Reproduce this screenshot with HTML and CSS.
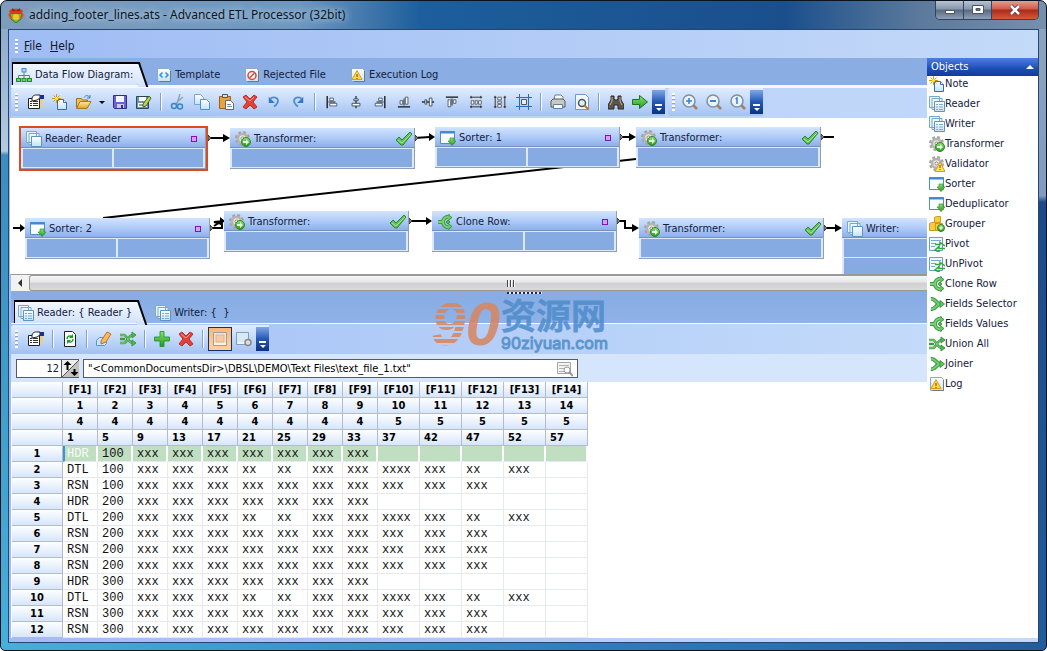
FILE: index.html
```html
<!DOCTYPE html>
<html lang="en">
<head>
<meta charset="utf-8">
<title>adding_footer_lines.ats - Advanced ETL Processor (32bit)</title>
<link rel="stylesheet" href="styles.css">
</head>
<body>
<svg class="defs" aria-hidden="true">
  <defs>
    <linearGradient id="gold" x2="0" y2="1"><stop stop-color="#fff0a0"/><stop offset="1" stop-color="#dfa020"/></linearGradient>
    <linearGradient id="grn" x2="0" y2="1"><stop stop-color="#8fe070"/><stop offset="1" stop-color="#1f9a20"/></linearGradient>
    <linearGradient id="sky" x2="0" y2="1"><stop stop-color="#fff"/><stop offset="1" stop-color="#c4e2f8"/></linearGradient>
    <pattern id="stripes" width="8" height="6" patternUnits="userSpaceOnUse"><rect width="8" height="4" fill="#d9855c"/></pattern>
  </defs>
  <symbol id="app" viewBox="0 0 16 16"><path d="M2 6l6-4 6 4-1 6-5 4-5-4z" fill="#7fb82a" stroke="#47751a"/><path d="M1 4l3-2h8l3 2-2 3H3z" fill="#e5341d"/><path d="M4 1l4 3 4-3v3H4z" fill="#b01c12"/><circle cx="8" cy="10" r="3" fill="#f6c528"/><path d="M1 7l2 4M15 7l-2 4" stroke="#e5471d" stroke-width="2"/></symbol>
  <symbol id="flow" viewBox="0 0 16 16"><path d="M8 5v4M2.500 11V8.500h11V11M8 8v3" fill="none" stroke="#777"/><rect x="6" y="1.500" width="4" height="3.500" fill="#a7d0ff" stroke="#4b8ede"/><g fill="#6fd06a" stroke="#23892a"><rect x=".5" y="11.500" width="4" height="3"/><rect x="6" y="11.500" width="4" height="3"/><rect x="11.500" y="11.500" width="4" height="3"/></g></symbol>
  <symbol id="sheet" viewBox="0 0 16 16"><path d="M1.500 1.500h11l2 2v11h-13z" fill="url(#sky)" stroke="#90a8c8"/><path d="M14.500 4v10.500h-11" fill="none" stroke="#777"/></symbol>
  <symbol id="template" viewBox="0 0 16 16"><use href="#sheet"/><path d="M6.500 5.500L4 8l2.500 2.500M9.500 5.500L12 8l-2.500 2.500" fill="none" stroke="#2d8fe8" stroke-width="1.500"/></symbol>
  <symbol id="reject" viewBox="0 0 16 16"><use href="#sheet"/><circle cx="8" cy="8.500" r="4" fill="#fff" stroke="#e2413a" stroke-width="1.500"/><path d="M5.500 11l5-5" stroke="#e2413a" stroke-width="1.500"/></symbol>
  <symbol id="log" viewBox="0 0 16 16"><use href="#sheet"/><path d="M7 3.500l5 9H2z" fill="#ffd84a" stroke="#e09a18"/><path d="M7 7v3M7 11v1" stroke="#6b4a00"/></symbol>
  <symbol id="props" viewBox="0 0 16 16"><path d="M.5 4.500h11v10H.5z" fill="#fff" stroke="#222"/><path d="M2 7.500h2M5 7.500h5M2 9.500h2M5 9.500h5M2 11.500h2M5 11.500h5" stroke="#333"/><path d="M4 4c1-3 3-3 5-3h3v3l-3 2-5 1z" fill="#fff" stroke="#222"/><path d="M12 1h4v4h-4z" fill="#1d2d9c"/><path d="M12 5h3v8h-3z" fill="#e8d08a"/></symbol>
  <symbol id="new" viewBox="0 0 16 16"><path d="M5.500 5.500h6l3 3v7h-9z" fill="url(#sky)" stroke="#3c6c9e"/><path d="M11.500 5.500v3h3" fill="#fff" stroke="#3c6c9e"/><path d="M4.500 0v9M0 4.500h9M1.500 1.500l6 6M7.500 1.500l-6 6" stroke="#d89a00"/><circle cx="4.500" cy="4.500" r="1.500" fill="#ffee50"/></symbol>
  <symbol id="open" viewBox="0 0 16 16"><path d="M.5 13.500V4.500h5l1 1.500h5v2" fill="#f0c050" stroke="#a07020"/><path d="M.5 14.500L4 7.500h11l-4 7z" fill="url(#gold)" stroke="#a97720"/><path d="M8 3.500c2-3 4-2 6 0M14 1v3h-3" fill="none" stroke="#3a7ac8"/></symbol>
  <symbol id="save" viewBox="0 0 16 16"><path d="M1.500 1.500h13v13h-12l-1-1z" fill="#6a63d8" stroke="#30308c"/><path d="M4 2h8v6H4z" fill="#f4f6ff"/><path d="M5 10h7v4H5z" fill="#c9cdea"/><path d="M9 11h2v3H9z" fill="#30308c"/></symbol>
  <symbol id="saveas" viewBox="0 0 16 16"><path d="M.5 2.500h12v12H.5z" fill="#7193a8" stroke="#26485f"/><path d="M3 3h7v4H3zM2 9h9v4H2z" fill="#fff"/><path d="M3 11h6" stroke="#26485f"/><path d="M7 10l6-8 2 2-5 8-3 1z" fill="#b7d957" stroke="#486418"/></symbol>
  <symbol id="cut" viewBox="0 0 16 16"><path d="M10 0L7 10M13 3L5 10" stroke="#8fa6ba" stroke-width="1.500"/><circle cx="4" cy="12" r="2.500" fill="none" stroke="#3b86c8" stroke-width="1.500"/><circle cx="10" cy="12.500" r="2.500" fill="none" stroke="#3b86c8" stroke-width="1.500"/></symbol>
  <symbol id="copy" viewBox="0 0 16 16"><path d="M.5.500h6l3 3v7h-9z" fill="url(#sky)" stroke="#76a6d8"/><path d="M6.500 5.500h6l3 3v7h-9z" fill="url(#sky)" stroke="#5590d0"/></symbol>
  <symbol id="paste" viewBox="0 0 16 16"><path d="M1.500 2.500h11v12h-11z" fill="#e8a33a" stroke="#9a601a"/><path d="M4.500.500h5v3h-5z" fill="#ddd" stroke="#555"/><path d="M7.500 6.500h5l3 3v6h-8z" fill="#fff" stroke="#667"/><path d="M9 10.500h4M9 12.500h5" stroke="#789"/></symbol>
  <symbol id="del" viewBox="0 0 16 16"><path d="M1 3l3-2 4 4 4-4 3 2-4 5 4 5-3 2-4-4-4 4-3-2 4-5z" fill="#e44038" stroke="#b8302c"/><path d="M3 3l5 4 4-4" fill="none" stroke="#ff9a8c"/></symbol>
  <symbol id="undo" viewBox="0 0 16 16"><path d="M4 4c5-3 10 0 8 5-1 2-2 3-4 4" fill="none" stroke="#4f8cd2" stroke-width="2"/><path d="M2 2v7h7z" fill="#3c77c4"/></symbol>
  <symbol id="redo" viewBox="0 0 16 16"><path d="M12 4c-5-3-10 0-8 5 1 2 2 3 4 4" fill="none" stroke="#4f8cd2" stroke-width="2"/><path d="M14 2v7H7z" fill="#3c77c4"/></symbol>
  <symbol id="al" viewBox="0 0 16 16"><path d="M2.500 1v14" stroke="#111" stroke-width="1.500"/><path d="M5.500 3.500h4v3h-4zM5.500 9.500h8v3h-8z" fill="#fff" stroke="#456"/><path d="M4 8h8" stroke="#111"/></symbol>
  <symbol id="ac" viewBox="0 0 16 16"><path d="M8 1v14" stroke="#234" stroke-width="1.500"/><path d="M5.500 4.500h5v2h-5zM3.500 9.500h9v3h-9z" fill="#fff" stroke="#345"/></symbol>
  <symbol id="ar" viewBox="0 0 16 16"><g transform="matrix(-1 0 0 1 16 0)"><use href="#al"/></g></symbol>
  <symbol id="ab" viewBox="0 0 16 16"><g transform="rotate(-90 8 8)"><use href="#al"/></g></symbol>
  <symbol id="am" viewBox="0 0 16 16"><g transform="rotate(-90 8 8)"><use href="#ac"/></g></symbol>
  <symbol id="at" viewBox="0 0 16 16"><g transform="rotate(90 8 8)"><use href="#al"/></g></symbol>
  <symbol id="sw" viewBox="0 0 16 16"><path d="M1 2.500h14M1 13.500h14M2.500 1v3M13.500 1v3M2.500 12v3M13.500 12v3" stroke="#222"/><path d="M2.500 6.500h3v4h-3zM7 6.500h2.500v4H7zM11 6.500h3v4h-3z" fill="#fff" stroke="#555"/></symbol>
  <symbol id="sh" viewBox="0 0 16 16"><g transform="rotate(90 8 8)"><use href="#sw"/></g></symbol>
  <symbol id="grid" viewBox="0 0 16 16"><path d="M3.500 0v16M12.500 0v16M0 3.500h16M0 12.500h16" stroke="#2869b8"/><path d="M5.500 5.500h5v5h-5z" fill="#eee" stroke="#555"/></symbol>
  <symbol id="print" viewBox="0 0 16 16"><path d="M4 6l1-5h6l2 2v3z" fill="#fff" stroke="#5d7fa5"/><path d="M1 7l2-2h10l2 2v6H1z" fill="#c7c9bd" stroke="#555b60"/><path d="M3.500 10.500h9v4h-9z" fill="#fff" stroke="#5d7fa5"/></symbol>
  <symbol id="preview" viewBox="0 0 16 16"><path d="M1.500.500h10l3 3v12h-13z" fill="#eff7ff" stroke="#6a9acc"/><circle cx="8" cy="9" r="3.500" fill="#d7efff" stroke="#555" stroke-width="1.500"/><path d="M10.500 11.500l4 4" stroke="#b87a28" stroke-width="2"/></symbol>
  <symbol id="find" viewBox="0 0 16 16"><path d="M3 2h3v3l1 1h2l1-1V2h3v4l3 5v4h-6v-4H6v4H0v-4l3-5z" fill="#5c554c" stroke="#2c2823"/><path d="M4 3v4L2 11M12 3v4l2 4" stroke="#bcb5a8" fill="none"/></symbol>
  <symbol id="run" viewBox="0 0 16 16"><path d="M.5 5.500h7V1.500L15.500 8l-8 6.500v-4h-7z" fill="url(#grn)" stroke="#14791c"/></symbol>
  <symbol id="lens" viewBox="0 0 16 16"><path d="M11 11l4 4" stroke="#a08060" stroke-width="2.500"/><circle cx="7" cy="7" r="6" fill="#e8f4ff" stroke="#8090a0" stroke-width="1.500"/></symbol>
  <symbol id="zin" viewBox="0 0 16 16"><use href="#lens"/><path d="M4 7h6M7 4v6" stroke="#3d7fd0" stroke-width="1.500"/></symbol>
  <symbol id="zout" viewBox="0 0 16 16"><use href="#lens"/><path d="M4 7h6" stroke="#3d7fd0" stroke-width="2"/></symbol>
  <symbol id="zone" viewBox="0 0 16 16"><use href="#lens"/><path d="M5.500 5L7 4v6" fill="none" stroke="#3d7fd0" stroke-width="1.500"/></symbol>
  <symbol id="pages" viewBox="0 0 16 16"><path d="M.5.500h10v11H.5zM3 2.500h10v11H3z" fill="#eaf6fc" stroke="#77a9c9"/><path d="M5.500 5.500h10v10h-10z" fill="url(#sky)" stroke="#5d95bd"/><path d="M7 8.500h2M10 8.500h4M7 11h2M10 11h4M7 13.500h2M10 13.500h4" stroke="#78acd4"/></symbol>
  <symbol id="stack" viewBox="0 0 16 16"><path d="M.5.500h10v11H.5zM3 2.500h10v11H3z" fill="#eaf6fc" stroke="#77a9c9"/><path d="M5.500 5.500h10v10h-10z" fill="url(#sky)" stroke="#5d95bd"/></symbol>
  <symbol id="gearbase" viewBox="0 0 16 16"><circle cx="7.500" cy="7.500" r="6" fill="none" stroke="#a5a4a0" stroke-width="3" stroke-dasharray="2.700 2"/><circle cx="7.500" cy="7.500" r="4.500" fill="#e8e6e2" stroke="#b5b3b0" stroke-width="2.500"/><circle cx="7.500" cy="7.500" r="1.500" fill="#fff" stroke="#888"/></symbol>
  <symbol id="gear" viewBox="0 0 16 16"><use href="#gearbase"/><circle cx="11" cy="11" r="4.500" fill="url(#grn)" stroke="#2d8a25"/><path d="M8 10h3V8l3 3-3 3v-2H8z" fill="#e9ffe0"/></symbol>
  <symbol id="valid" viewBox="0 0 16 16"><use href="#gearbase"/><path d="M11 6l5 9.500H6z" fill="#ffe35c" stroke="#dd9b1b"/><path d="M11 9v3M11 13v1" stroke="#6b4a00"/></symbol>
  <symbol id="sort" viewBox="0 0 16 16"><path d="M.5 1.500h14v12H.5z" fill="#f8fdff" stroke="#4f8fc8"/><path d="M0 2.500h15" stroke="#4388cf" stroke-width="2"/><path d="M10 8h4v3h2l-4 4.500L8 11h2z" fill="url(#grn)" stroke="#359030" stroke-width=".7"/></symbol>
  <symbol id="group" viewBox="0 0 16 16"><path d="M5.500 1.500l2-1h4v6h-6zM.5 7.500l2-1h4v8h-6zM6.500 7.500h7v7h-7z" fill="#f8cc3c" stroke="#d29a18"/><circle cx="12" cy="12" r="3.500" fill="url(#grn)" stroke="#35822c"/><path d="M10 12h4M12 10v4" stroke="#fff"/></symbol>
  <symbol id="pivot" viewBox="0 0 16 16"><path d="M.5 1.500h13v13H.5z" fill="#effaff" stroke="#679dcc"/><path d="M2 4.500h10M2 7.500h5M2 10.500h4" stroke="#7ca7cf"/><path d="M6 8.500h5v-2l5 3.500M16 12.500h-6v-2l-4 3.500 4 2v-2" fill="none" stroke="#36a540" stroke-width="1.500"/></symbol>
  <symbol id="clone" viewBox="0 0 16 16"><path d="M1 8h4M13 2.500c-5 0-7 3-7 5.500s2 5.500 7 5.500" fill="none" stroke="#3f9c43" stroke-width="4"/><path d="M1 8h4M13 2.500c-5 0-7 3-7 5.500s2 5.500 7 5.500" fill="none" stroke="#7bd07a" stroke-width="2"/><path d="M11 .5l4 3-4 3M11 9.500l4 3-4 3" fill="#6ac76a" stroke="#3f9c43"/><circle cx="11" cy="8" r="1.500" fill="#6ac76a" stroke="#2d8f33"/></symbol>
  <symbol id="join" viewBox="0 0 16 16"><path d="M2 3c5-1 4 5 10 5M2 13c5 1 4-5 10-5" fill="none" stroke="#3a9640" stroke-width="4"/><path d="M2 3c5-1 4 5 10 5M2 13c5 1 4-5 10-5" fill="none" stroke="#74cc74" stroke-width="2"/><path d="M11 4.500L15.500 8 11 11.500z" fill="#66c468" stroke="#3a9640"/></symbol>
  <symbol id="union" viewBox="0 0 16 16"><path d="M0 4h4c3 0 4 8 9 8M0 12h4c3 0 4-8 9-8M0 8h5" fill="none" stroke="#3f9c43" stroke-width="2.500"/><path d="M0 4h4c3 0 4 8 9 8M0 12h4c3 0 4-8 9-8" fill="none" stroke="#83d580"/><path d="M12 1l4 3-4 3zM12 9l4 3-4 3z" fill="#55b957" stroke="#3a9640"/></symbol>
  <symbol id="check" viewBox="0 0 18 16"><path d="M1 9l3-3 3 3 8-8 2 2L8 14H6z" fill="#62c05c" stroke="#28882a"/><path d="M3 9l4 3 9-9" fill="none" stroke="#a5e49a"/></symbol>
  <symbol id="refresh" viewBox="0 0 16 16"><path d="M2.500.500h8l3 3v12h-11z" fill="#fff" stroke="#222"/><path d="M5 8c0-3 3-4 5-2M11 8c0 3-3 4-5 2" fill="none" stroke="#18a020" stroke-width="1.500"/><path d="M11 3v4H7zM5 13V9h4z" fill="#18a020"/></symbol>
  <symbol id="edit" viewBox="0 0 16 16"><path d="M.5 9.500l3-3h7v6l-2 2h-8z" fill="#c8e5ff" stroke="#5b93cf"/><path d="M5 10l6-9 4 2-5 8-5 2z" fill="#f7b95a" stroke="#b8732b"/></symbol>
  <symbol id="add" viewBox="0 0 16 16"><path d="M6 .500h4V6h5.500v4H10v5.500H6V10H.5V6H6z" fill="url(#grn)" stroke="#189022" stroke-width=".8"/></symbol>
  <symbol id="panel" viewBox="0 0 16 16"><path d="M1.500 1.500h13v13h-13z" fill="#f3e1cc" stroke="#9b9fa3"/><path d="M4 4h8v7H4z" fill="#f8caa0" stroke="#d6ac86" stroke-width=".7"/><path d="M2 13h12" stroke="#fff"/></symbol>
  <symbol id="panelgear" viewBox="0 0 16 16"><path d="M.5 1.500h12v12H.5z" fill="#d9e8f5" stroke="#829dba"/><path d="M2 12h9" stroke="#fff"/><circle cx="12" cy="11.500" r="3" fill="#ddd" stroke="#888" stroke-width="1.500"/></symbol>
  <symbol id="browse" viewBox="0 0 16 16"><path d="M.5 1.500h13v11H.5z" fill="#f4f4f4" stroke="#a5a5a5"/><path d="M2 4.500h10M2 7.500h5M2 10.500h5" stroke="#b0b0b0"/><circle cx="10" cy="9" r="3" fill="#fff" stroke="#999"/><path d="M12 11l4 4" stroke="#999" stroke-width="2"/></symbol>
</svg>

<div class="window">
  <header class="titlebar">
    <svg class="ico"><use href="#app"/></svg>
    <h1 class="caption">adding_footer_lines.ats - Advanced ETL Processor (32bit)</h1>
    <div class="winbtns">
      <button class="winbtn" aria-label="Minimize"><svg viewBox="0 0 14 12"><path d="M2.500 6.500h9v3h-9z" fill="#fff" stroke="#4d5565"/></svg></button>
      <button class="winbtn" aria-label="Maximize"><svg viewBox="0 0 14 12"><path d="M1.500 1.500h11v8h-11z" fill="#fff" stroke="#4d5565"/><path d="M5 4.500h4v2H5z" fill="#637088" stroke="#4d5565"/></svg></button>
      <button class="winbtn close" aria-label="Close"><svg viewBox="0 0 14 12"><path d="M3 2l8 8M11 2l-8 8" stroke="#6a3038" stroke-width="4"/><path d="M3 2l8 8M11 2l-8 8" stroke="#fff" stroke-width="2.500"/></svg></button>
    </div>
  </header>

  <div class="client">
    <nav class="menubar"><span class="grip"></span><button class="menu"><u>F</u>ile</button><button class="menu"><u>H</u>elp</button></nav>
    <div class="work">
      <main class="left">
        <div class="tabs">
          <button class="tab active"><svg class="ico"><use href="#flow"/></svg>Data Flow Diagram:</button>
          <button class="tab"><svg class="ico"><use href="#template"/></svg>Template</button>
          <button class="tab"><svg class="ico"><use href="#reject"/></svg>Rejected File</button>
          <button class="tab"><svg class="ico"><use href="#log"/></svg>Execution Log</button>
        </div>
        <div class="bars">
          <div class="toolbar">
            <span class="grip"></span>
            <button class="tool" aria-label="Properties"><svg class="ico"><use href="#props"/></svg></button>
            <button class="tool" aria-label="New"><svg class="ico"><use href="#new"/></svg></button>
            <button class="tool" aria-label="Open"><svg class="ico"><use href="#open"/></svg></button>
            <button class="drop" aria-label="Recent files"></button>
            <button class="tool" aria-label="Save"><svg class="ico"><use href="#save"/></svg></button>
            <button class="tool" aria-label="Save as"><svg class="ico"><use href="#saveas"/></svg></button>
            <span class="sep"></span>
            <button class="tool" aria-label="Cut"><svg class="ico"><use href="#cut"/></svg></button>
            <button class="tool" aria-label="Copy"><svg class="ico"><use href="#copy"/></svg></button>
            <button class="tool" aria-label="Paste"><svg class="ico"><use href="#paste"/></svg></button>
            <button class="tool" aria-label="Delete"><svg class="ico"><use href="#del"/></svg></button>
            <button class="tool" aria-label="Undo"><svg class="ico small"><use href="#undo"/></svg></button>
            <button class="tool" aria-label="Redo"><svg class="ico small"><use href="#redo"/></svg></button>
            <span class="sep"></span>
            <button class="tool" aria-label="Align left"><svg class="ico small"><use href="#al"/></svg></button>
            <button class="tool" aria-label="Align centre"><svg class="ico small"><use href="#ac"/></svg></button>
            <button class="tool" aria-label="Align right"><svg class="ico small"><use href="#ar"/></svg></button>
            <button class="tool" aria-label="Align bottom"><svg class="ico small"><use href="#ab"/></svg></button>
            <button class="tool" aria-label="Align middle"><svg class="ico small"><use href="#am"/></svg></button>
            <button class="tool" aria-label="Align top"><svg class="ico small"><use href="#at"/></svg></button>
            <button class="tool" aria-label="Space across"><svg class="ico small"><use href="#sw"/></svg></button>
            <button class="tool" aria-label="Space down"><svg class="ico small"><use href="#sh"/></svg></button>
            <button class="tool" aria-label="Snap to grid"><svg class="ico"><use href="#grid"/></svg></button>
            <span class="sep"></span>
            <button class="tool" aria-label="Print"><svg class="ico"><use href="#print"/></svg></button>
            <button class="tool" aria-label="Preview"><svg class="ico"><use href="#preview"/></svg></button>
            <span class="sep"></span>
            <button class="tool" aria-label="Find"><svg class="ico"><use href="#find"/></svg></button>
            <button class="tool" aria-label="Run"><svg class="ico"><use href="#run"/></svg></button>
            <button class="more" aria-label="More tools"></button>
          </div>
          <div class="toolbar">
            <span class="grip"></span>
            <button class="tool" aria-label="Zoom in"><svg class="ico"><use href="#zin"/></svg></button>
            <button class="tool" aria-label="Zoom out"><svg class="ico"><use href="#zout"/></svg></button>
            <button class="tool" aria-label="Actual size"><svg class="ico"><use href="#zone"/></svg></button>
            <button class="more" aria-label="More tools"></button>
          </div>
        </div>

        <div class="canvas">
          <svg class="wires" width="920" height="156" fill="none" stroke="#000" stroke-width="2">
            <path d="M93 100L626 41M197 20h18M404 20l16-1M609 19h12M810 19h14M3 110h9M398 103h19M606 103h9v7h8M813 110h13M203 110h9v-4l-8-2 10-1M204 108l8-5"/>
            <g fill="#000" stroke="none"><path d="M213 16l7 4-7 4zM419 15l6 4-6 4zM619 15l7 4-7 4zM10 106l5 4-5 4zM210 99l5 4-5 4zM416 99l6 4-6 4zM622 106l7 4-7 4zM825 106l7 4-7 4z"/></g>
            <g fill="#888" stroke="#333" stroke-width="1"><path d="M198 17l3 3-3 3zM405 17l3 3-3 3zM610 16l3 3-3 3zM811 16l3 3-3 3zM200 107l3 3-3 3zM399 100l3 3-3 3zM607 100l3 3-3 3zM814 107l3 3-3 3z"/></g>
          </svg>
          <div class="node n1 selected"><div class="nhead"><svg class="ico"><use href="#stack"/></svg>Reader: Reader<i class="port"></i></div><div class="slots"><i></i><i></i></div></div>
          <div class="node n2"><div class="nhead"><svg class="ico"><use href="#gear"/></svg>Transformer:<svg class="tick"><use href="#check"/></svg></div><div class="slots"><i></i></div></div>
          <div class="node n3"><div class="nhead"><svg class="ico"><use href="#sort"/></svg>Sorter: 1<i class="port"></i></div><div class="slots"><i></i><i></i></div></div>
          <div class="node n4"><div class="nhead"><svg class="ico"><use href="#gear"/></svg>Transformer:<svg class="tick"><use href="#check"/></svg></div><div class="slots"><i></i></div></div>
          <div class="node n5"><div class="nhead"><svg class="ico"><use href="#sort"/></svg>Sorter: 2<i class="port"></i></div><div class="slots"><i></i><i></i></div></div>
          <div class="node n6"><div class="nhead"><svg class="ico"><use href="#gear"/></svg>Transformer:<svg class="tick"><use href="#check"/></svg></div><div class="slots"><i></i></div></div>
          <div class="node n7"><div class="nhead"><svg class="ico"><use href="#clone"/></svg>Clone Row:<i class="port"></i></div><div class="slots"><i></i><i></i></div></div>
          <div class="node n8"><div class="nhead"><svg class="ico"><use href="#gear"/></svg>Transformer:<svg class="tick"><use href="#check"/></svg></div><div class="slots"><i></i></div></div>
          <div class="node n9"><div class="nhead"><svg class="ico"><use href="#stack"/></svg>Writer:</div><div class="slots"><i></i></div><div class="slots"><i></i></div></div>
        </div>
        <div class="hscroll"><button class="sarrow" aria-label="Scroll left"></button><div class="thumb"><i></i><i></i><i></i></div></div>

        <section class="detail">
          <div class="splitter"><span></span></div>
          <div class="tabs lower">
            <button class="tab active"><svg class="ico"><use href="#pages"/></svg>Reader: { Reader }</button>
            <button class="tab"><svg class="ico"><use href="#pages"/></svg>Writer: {&nbsp; }</button>
          </div>
          <div class="bars lower">
            <div class="toolbar">
              <span class="grip"></span>
              <button class="tool" aria-label="Properties"><svg class="ico"><use href="#props"/></svg></button>
              <span class="sep"></span>
              <button class="tool" aria-label="Refresh"><svg class="ico"><use href="#refresh"/></svg></button>
              <span class="sep"></span>
              <button class="tool" aria-label="Edit"><svg class="ico"><use href="#edit"/></svg></button>
              <button class="tool" aria-label="Shuffle"><svg class="ico"><use href="#union"/></svg></button>
              <span class="sep"></span>
              <button class="tool" aria-label="Add"><svg class="ico"><use href="#add"/></svg></button>
              <button class="tool" aria-label="Delete"><svg class="ico"><use href="#del"/></svg></button>
              <span class="sep"></span>
              <button class="tool pressed" aria-label="Show data"><svg class="ico"><use href="#panel"/></svg></button>
              <button class="tool" aria-label="Data options"><svg class="ico"><use href="#panelgear"/></svg></button>
              <button class="more" aria-label="More tools"></button>
            </div>
          </div>
          <div class="pathrow">
            <div class="spin"><input class="count" aria-label="Lines" value="12"><button class="updown" aria-label="Change lines"><svg viewBox="0 0 17 17"><path d="M17 0v17H0z" fill="#c4c2be"/><path d="M0 17L17 0" stroke="#555"/><path d="M5.500 1l4 4h-3v5h-2V5h-3zM12.500 16l-4-4h3V9h2v3h3z" fill="#000"/></svg></button></div>
            <div class="pathbox"><input class="path" aria-label="File path" value="&quot;&lt;CommonDocumentsDir&gt;\DBSL\DEMO\Text Files\text_file_1.txt&quot;"><button class="browse" aria-label="Browse"><svg class="ico"><use href="#browse"/></svg></button></div>
          </div>
          <div class="mark" aria-hidden="true">
            <svg class="mark90" width="72" height="70" viewBox="0 0 72 70" fill="url(#stripes)"><text x="0" y="54">9<tspan class="solid">0</tspan></text></svg>
            <div class="marktext"><span class="cjk">资源网</span><span class="site">90ziyuan.com</span></div>
          </div>
        </section>

        <div class="gridwrap">
          <table class="data">
            <colgroup><col class="c0"><col span="9" class="c3"><col span="5" class="c4"></colgroup>
            <thead></thead>
            <tbody></tbody>
          </table>
        </div>
      </main>

      <aside class="objects">
        <h2 class="ohead">Objects<i></i></h2>
        <ul class="olist">
          <li><svg class="ico"><use href="#new"/></svg>Note</li>
          <li><svg class="ico"><use href="#pages"/></svg>Reader</li>
          <li><svg class="ico"><use href="#pages"/></svg>Writer</li>
          <li><svg class="ico"><use href="#gear"/></svg>Transformer</li>
          <li><svg class="ico"><use href="#valid"/></svg>Validator</li>
          <li><svg class="ico"><use href="#sort"/></svg>Sorter</li>
          <li><svg class="ico"><use href="#sort"/></svg>Deduplicator</li>
          <li><svg class="ico"><use href="#group"/></svg>Grouper</li>
          <li><svg class="ico"><use href="#pivot"/></svg>Pivot</li>
          <li><svg class="ico"><use href="#pivot"/></svg>UnPivot</li>
          <li><svg class="ico"><use href="#clone"/></svg>Clone Row</li>
          <li><svg class="ico"><use href="#join"/></svg>Fields Selector</li>
          <li><svg class="ico"><use href="#clone"/></svg>Fields Values</li>
          <li><svg class="ico"><use href="#union"/></svg>Union All</li>
          <li><svg class="ico"><use href="#join"/></svg>Joiner</li>
          <li><svg class="ico"><use href="#log"/></svg>Log</li>
        </ul>
      </aside>
    </div>
  </div>
</div>
<script src="grid.js"></script>
</body>
</html>
```

FILE: styles.css
```css
* { box-sizing: border-box; }
body { margin: 0; font: 11px/16px "DejaVu Sans Condensed", "Noto Sans", sans-serif; color: #14203c; }
button, input { font: inherit; color: inherit; margin: 0; padding: 0; border: 0; background: none; }
.defs { position: absolute; width: 0; height: 0; }
.ico { width: 16px; height: 16px; flex: none; display: block; }
.ico.small { width: 14px; height: 14px; }

.window { min-height: 100vh; display: flex; flex-direction: column; padding: 0 7px 7px; border-radius: 7px 7px 5px 5px; border: 1px solid #0a1420;
  background:
    linear-gradient(90deg, #7e9cbc 0, #6d97bf 300px, #1d5e9c 420px, #1a4f8c 75%, #5c7a9c 88%, #7690ac 100%) top / 100% 28px no-repeat,
    linear-gradient(90deg, #45b0da, #2d84c6 50%, #235c9c) bottom / 100% 7px no-repeat,
    linear-gradient(#86a4c6 0, #b4cbe0 150px, #3c8dbd 154px, #45b0da 100%) left / 50% 100% no-repeat,
    linear-gradient(#8da5c0 0, #7f9cbe 30%, #1d4a86 31%, #235c9c 100%) right / 50% 100% no-repeat; }
.titlebar { height: 28px; display: flex; align-items: flex-start; }
.titlebar > .ico { margin-top: 6px; }
.caption { flex: 1; margin: 5px 0 0 5px; font: 12px/18px "Noto Sans", sans-serif; color: #0c1626; text-shadow: 0 0 6px #b8cfe4, 0 0 8px #b8cfe4; }
.winbtns { display: flex; border: 1px solid #2f4360; border-top: 0; border-radius: 0 0 5px 5px; overflow: hidden; }
.winbtn { width: 28px; height: 18px; display: grid; place-items: center; background: linear-gradient(#b8c3d2 0, #8796ac 45%, #58697f 50%, #8ea0b8 100%); border-right: 1px solid #34455f; }
.winbtn svg { width: 14px; height: 12px; }
.winbtn.close { width: 46px; border: 0; background: linear-gradient(#e0a093 0, #cf5a45 45%, #a92a18 50%, #d8583a 100%); }

.client { flex: 1; display: flex; flex-direction: column; background: linear-gradient(90deg, #9fbcf4, #c4daf9); border: 1px solid #26466e; padding-bottom: 4px; }
.menubar { height: 28px; display: flex; align-items: center; gap: 8px; padding: 4px 6px 0; font-size: 12px; }
.grip { width: 3px; height: 18px; flex: none; background: repeating-linear-gradient(#fff 0 2px, #8ea6d0 2px 3px, transparent 3px 4px); }
.menubar .grip { height: 14px; margin-right: -2px; }
.menu { color: #10182c; }
.work { flex: 1; display: flex; }
.left { flex: 1; min-width: 0; display: flex; flex-direction: column; padding-left: 2px; }

.tabs { height: 27px; display: flex; align-items: flex-end; gap: 14px; background: #8aade3; padding-left: 1px; }
.tab { height: 23px; display: flex; align-items: center; gap: 3px; padding: 2px 5px 0; white-space: nowrap; }
.tab.active { position: relative; padding: 0 4px 0 3px; background: linear-gradient(#f2f7ff, #d3e2fa); border: 2px solid #000; border-width: 2px 0 0 1px; }
.tab.active::after { content: ""; position: absolute; left: 100%; margin-left: -3px; top: -2px; width: 8px; height: 23px; background: linear-gradient(#f2f7ff, #d3e2fa); border: 2px solid #000; border-width: 2px 2px 0 0; transform: skewX(19deg); }
.tabs.lower { height: 26px; padding-left: 3px; background: none; }

.bars { height: 33px; display: flex; gap: 3px; border-top: 3px solid #f4f8ff; padding-bottom: 2px; background: linear-gradient(90deg, #b3cdf8, #c0d7f9); }
.toolbar { display: flex; align-items: center; padding-left: 4px; height: 28px; background: linear-gradient(#e0ecff, #c5daf9 45%, #a3c2f2); border-radius: 3px 0 0 3px; }
.toolbar .grip { margin-right: 6px; }
.bars .toolbar + .toolbar .grip { margin-right: 3px; }
.tool { width: 24px; height: 24px; display: grid; place-items: center; flex: none; }
.tool.pressed { background: linear-gradient(#fbb878, #fdd39b); border: 1px solid #14306c; }
.drop { width: 12px; height: 24px; flex: none; }
.drop::before { content: ""; display: block; margin: 0 3px; border: 3px solid transparent; border-top-color: #000; border-bottom: 0; }
.sep { width: 10px; height: 18px; flex: none; background: linear-gradient(90deg, transparent 4px, #7f9fd0 4px 5px, #fff 5px 6px, transparent 6px); }
.more { width: 13px; height: 24px; flex: none; background: linear-gradient(#7fa6e8, #2458b4 50%, #0c3184); display: flex; flex-direction: column; align-items: center; justify-content: flex-end; padding-bottom: 3px; gap: 2px; }
.more::before { content: ""; width: 7px; height: 2px; background: #fff; }
.more::after { content: ""; border: 3px solid transparent; border-top-color: #fff; border-bottom: 0; }

.canvas { position: relative; height: 156px; overflow: hidden; background: #fff; margin-left: -1px; }
.wires { position: absolute; left: 0; top: 0; }
.node { position: absolute; width: 185px; background: #dce9fb; border-right: 1px solid #8d9fbb; border-bottom: 1px solid #8d9fbb; }
.nhead { height: 20px; display: flex; align-items: center; gap: 3px; padding: 2px 8px 0 5px; background: linear-gradient(#d3e4fe, #a9c7f6 60%, #8db0ea); border-bottom: 1px solid #7890ba; }
.port { width: 6px; height: 6px; margin-left: auto; background: #dd9cf2; border: 1px solid #8412b8; }
.tick { width: 18px; height: 16px; margin-left: auto; margin-right: -7px; }
.slots { display: flex; gap: 2px; padding: 1px 2px; height: 20px; }
.slots + .slots { padding-top: 0; }
.slots i { flex: 1; background: #86abe3; }
.node.selected { outline: 2px solid #dc4a22; outline-offset: 0; }
.n1 { left: 11px; top: 10px; }
.n2 { left: 220px; top: 10px; }
.n3 { left: 425px; top: 9px; }
.n4 { left: 626px; top: 9px; }
.n5 { left: 15px; top: 100px; }
.n6 { left: 214px; top: 93px; }
.n7 { left: 422px; top: 93px; }
.n8 { left: 629px; top: 100px; }
.n9 { left: 832px; top: 100px; }

.hscroll { height: 17px; display: flex; background: #f2f2f2; border-top: 1px solid #999; }
.sarrow { width: 18px; display: grid; place-items: center; }
.sarrow::before { content: ""; border: 4px solid transparent; border-right-color: #333; border-left: 0; }
.thumb { flex: 1; display: flex; gap: 2px; align-items: center; justify-content: center; padding-left: 64px; border: 1px solid #999; border-right: 0; border-radius: 3px 0 0 3px; background: linear-gradient(#f6f6f6 0, #e6e6e8 45%, #cfcfd2 50%, #dadadc 100%); }
.thumb i { width: 1px; height: 7px; background: #444; box-shadow: 1px 0 #fff; }

.detail { position: relative; background: linear-gradient(#86ace3, #8fb2e8) top / 100% 32px no-repeat, #d4e5fc; }
.splitter { height: 6px; display: flex; justify-content: center; padding: 1px 0 0 110px; }
.splitter span { width: 35px; height: 2px; background: repeating-linear-gradient(90deg, #1c2c50 0 2px, #dfe9fa 2px 4px); }
.bars.lower { height: 31px; border-top-width: 1px; background: linear-gradient(90deg, #a4c1f6, #c3daf9); padding-top: 1px; }
.pathrow { display: flex; gap: 4px; padding: 5px 5px 4px; background: #d4e5fc; }
.spin { display: flex; width: 63px; height: 19px; border: 1px solid #555c68; background: #fff; }
.count { flex: 1; min-width: 0; text-align: right; padding-right: 2px; }
.updown { width: 17px; border-left: 1px solid #555; background: #efeeea; }
.updown svg { display: block; width: 17px; height: 17px; }
.pathbox { display: flex; align-items: center; width: 495px; height: 19px; border: 1px solid #555c68; background: #fff; }
.path { flex: 1; min-width: 0; padding-left: 4px; color: #000; }
.browse { margin-right: 4px; }
.mark { position: absolute; z-index: 2; left: 50%; top: 0; margin-left: -38px; display: flex; opacity: .85; pointer-events: none; }
.mark90 { display: block; margin-right: -2px; overflow: visible; font: italic bold 62px "Liberation Sans", sans-serif; }
.mark90 .solid { fill: #d9855c; }
.marktext { display: flex; flex-direction: column; color: #4d8cca; }
.cjk { font: 500 35px/40px "Noto Sans CJK SC", sans-serif; padding-top: 3px; -webkit-text-stroke: 1px #4d8cca; }
.site { font: 16px/18px "Inter", "Liberation Sans", sans-serif; -webkit-text-stroke: 1px #4d8cca; }

.gridwrap { flex: 1; background: #fff; margin-right: -111px; padding-left: 1px; }
.data { border-collapse: separate; border-spacing: 0; table-layout: fixed; width: 576px; }
.c0 { width: 51px; }
.c3 { width: 35px; }
.c4 { width: 42px; }
.data th, .data td { height: 16px; padding: 0 0 0 4px; line-height: 15px; overflow: hidden; white-space: nowrap; text-align: left; border-right: 1px solid #e6e9f0; border-bottom: 1px solid #e6e9f0; }
.data th { padding: 0; text-align: center; font-size: 11px; color: #000; background: linear-gradient(#fff, #eef4fe 40%, #d6e6fc); border-color: #b4bccc; }
.data thead tr:last-child th { text-align: left; padding-left: 4px; }
.data td { padding-top: 2px; font: 12px/13px "Liberation Mono", monospace; color: #111; }
.data .sel td { background: #c0dec0; border-right: 2px solid #fff; }
.data .sel td:nth-child(2) { color: #f8fff8; border-left: 2px solid #3a93d4; padding-left: 2px; }

.objects { width: 111px; position: relative; display: flex; flex-direction: column; background: #fff; }
.ohead { margin: 0; height: 18px; display: flex; align-items: center; justify-content: space-between; padding: 0 4px; font-size: 11px; font-weight: normal; color: #fff; background: linear-gradient(#4a7fe4, #1d4db4 60%, #123c98); }
.ohead i { border: 4px solid transparent; border-bottom-color: #fff; border-top: 0; }
.olist { list-style: none; margin: -2px 0 0; padding: 0 0 0 2px; }
.olist li { height: 20px; display: flex; align-items: center; white-space: nowrap; }
```

FILE: grid.js
```js
const fields = [...Array(14).keys()].map(i => i + 1);
const starts = [1, 5, 9, 13, 17, 21, 25, 29, 33, 37, 42, 47, 52, 57];
const head = [
  fields.map(n => `[F${n}]`),
  fields,
  fields.map(n => (n < 10 ? 4 : 5)),
  starts
];
document.querySelector(".data thead").innerHTML = head
  .map(r => "<tr><th></th>" + r.map(v => `<th>${v}</th>`).join("") + "</tr>").join("");

const x = n => Array(n).fill("xxx");
const shapes = {
  HDR: [...x(7), "", "", "", "", ""],
  DTL: [...x(3), "xx", "xx", "xxx", "xxx", "xxxx", "xxx", "xx", "xxx", ""],
  RSN: [...x(10), "", ""]
};
const rows = ["HDR 100", "DTL 100", "RSN 100", "HDR 200", "DTL 200", "RSN 200",
  "RSN 200", "RSN 200", "HDR 300", "DTL 300", "RSN 300", "RSN 300"];
document.querySelector(".data tbody").innerHTML = rows.map((r, i) => {
  const [kind, code] = r.split(" ");
  const cells = [kind, code, ...shapes[kind]].map(v => `<td>${v}</td>`).join("");
  return `<tr${i ? "" : ' class="sel"'}><th>${i + 1}</th>${cells}</tr>`;
}).join("");
```
